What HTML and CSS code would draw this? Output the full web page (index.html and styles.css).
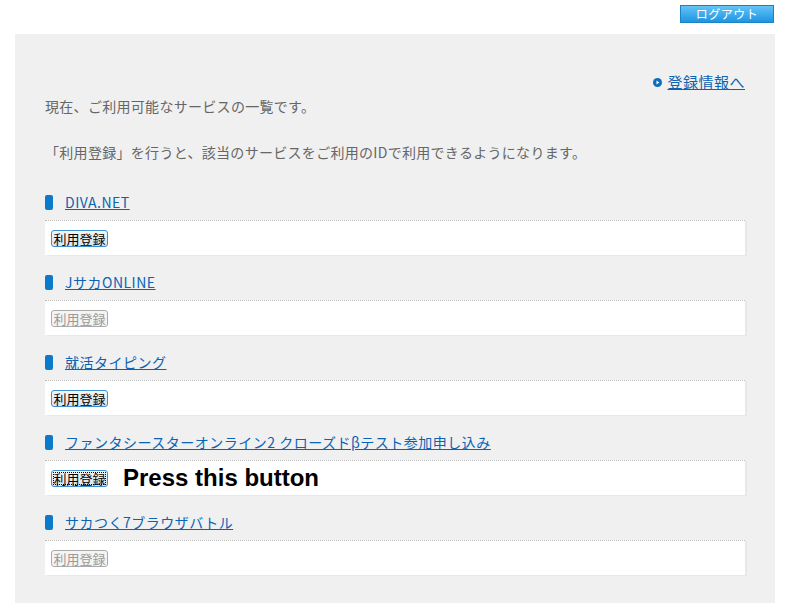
FILE: index.html
```html
<!DOCTYPE html>
<html lang="ja">
<head>
<meta charset="utf-8">
<link rel="stylesheet" href="styles.css">
</head>
<body>
<div class="topbar">
  <button class="logout">ログアウト</button>
</div>
<div class="panel">
  <div class="toplink"><svg class="dot" width="9" height="9" viewBox="0 0 9 9"><circle cx="4.5" cy="4.5" r="4.5" fill="#0a6fc2"/><path d="M3.5 2.6 L6.3 4.5 L3.5 6.4 Z" fill="#fff"/></svg><a href="#">登録情報へ</a></div>
  <p class="intro">現在、ご利用可能なサービスの一覧です。</p>
  <p class="intro">「利用登録」を行うと、該当のサービスをご利用のIDで利用できるようになります。</p>

  <div class="service">
    <h3 class="svc-title"><span class="mark"></span><a href="#">DIVA.NET</a></h3>
    <div class="svc-box"><button class="reg">利用登録</button></div>
  </div>
  <div class="service">
    <h3 class="svc-title"><span class="mark"></span><a href="#">JサカONLINE</a></h3>
    <div class="svc-box"><button class="reg" disabled>利用登録</button></div>
  </div>
  <div class="service">
    <h3 class="svc-title"><span class="mark"></span><a href="#">就活タイピング</a></h3>
    <div class="svc-box"><button class="reg">利用登録</button></div>
  </div>
  <div class="service">
    <h3 class="svc-title"><span class="mark"></span><a href="#">ファンタシースターオンライン2 クローズドβテスト参加申し込み</a></h3>
    <div class="svc-box"><button class="reg focus">利用登録</button><span class="press">Press this button</span></div>
  </div>
  <div class="service">
    <h3 class="svc-title"><span class="mark"></span><a href="#">サカつく7ブラウザバトル</a></h3>
    <div class="svc-box"><button class="reg" disabled>利用登録</button></div>
  </div>
</div>
</body>
</html>
```

FILE: styles.css
```css
html, body {
  margin: 0;
  padding: 0;
  background: #fff;
  font-family: "Noto Sans CJK JP", "Noto Sans", sans-serif;
}
.topbar {
  display: flex;
  justify-content: flex-end;
  padding: 5px 21px 0 0;
  height: 34px;
  box-sizing: border-box;
}
.logout {
  width: 94px;
  height: 18px;
  padding: 0;
  border: 1px solid #1c82c8;
  background: linear-gradient(#63c3f6, #1d95e2);
  color: #fff;
  font-family: "Noto Sans CJK JP", sans-serif;
  font-size: 12px;
  line-height: 16px;
  letter-spacing: 0.5px;
}
.panel {
  margin: 0 20px 0 15px;
  background: #f0f0f0;
  padding: 38px 30px 28px 30px;
  min-height: 569px;
  box-sizing: border-box;
}
.toplink {
  display: flex;
  justify-content: flex-end;
  align-items: center;
  gap: 5px;
  font-size: 15px;
  line-height: 20px;
  height: 20px;
  letter-spacing: 0.5px;
}
.toplink a {
  color: #0b63b3;
}
.dot {
  display: block;
  flex: none;
}
.intro {
  margin: 0;
  font-size: 14px;
  line-height: 20px;
  color: #666;
  letter-spacing: 0.3px;
}
.toplink + .intro {
  margin-top: 4px;
}
.intro + .intro {
  margin-top: 26px;
}
.service {
  margin-top: 30px;
}
.service + .service {
  margin-top: 17px;
}
.svc-title {
  margin: 0;
  display: flex;
  align-items: center;
  gap: 12px;
  font-size: 14px;
  font-weight: normal;
  line-height: 20px;
  height: 20px;
  letter-spacing: 0.5px;
}
.svc-title a {
  color: #0b63b3;
}
.mark {
  width: 8px;
  height: 15px;
  background: #0a7acc;
  border-radius: 2px;
}
.svc-box {
  margin-top: 8px;
  height: 34px;
  border-top: 1px dotted #bbb;
  background: #fff;
  display: flex;
  align-items: center;
  padding-left: 6px;
  box-shadow: 2px 1px 0 #e8e8e8;
}
.reg {
  width: 57px;
  height: 17px;
  padding: 0;
  font-family: "Noto Sans CJK JP", sans-serif;
  font-size: 13px;
  line-height: 15px;
  color: #000;
  border: 1px solid #3d8fcf;
  border-radius: 3px;
  background: linear-gradient(#f4f6f8, #d8e4ee);
}
.reg:disabled {
  color: #999;
  border-color: #aaa;
  background: #f4f4f4;
}
.reg.focus {
  outline: 1px dotted #000;
  outline-offset: -3px;
}
.press {
  margin-left: 15px;
  font-family: "Liberation Sans", Arial, sans-serif;
  font-weight: bold;
  font-size: 24px;
  color: #000;
  line-height: 26px;
}
```
